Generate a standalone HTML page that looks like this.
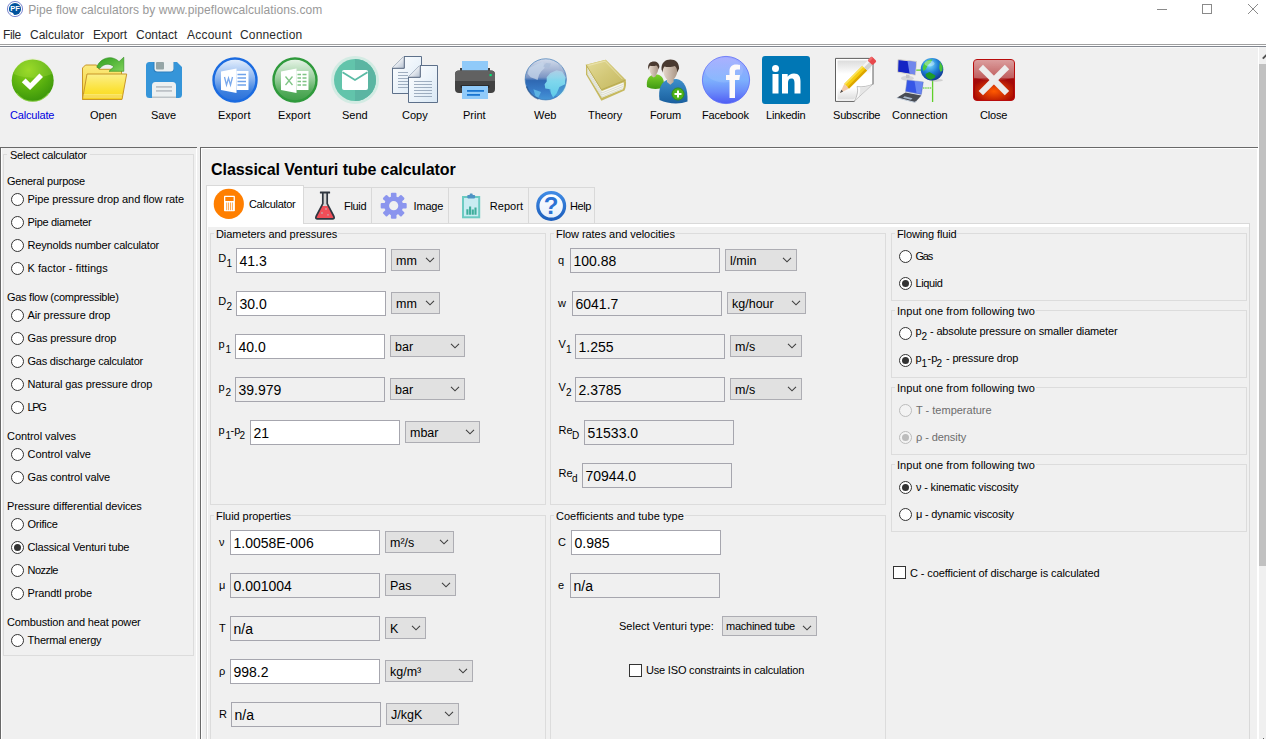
<!DOCTYPE html>
<html><head><meta charset="utf-8"><title>Pipe flow calculators</title>
<style>

html,body{margin:0;padding:0}
body{width:1266px;height:739px;overflow:hidden;position:relative;background:#f0f0f0;font-family:"Liberation Sans",sans-serif;font-size:11px;color:#000}
div,span.t,svg{position:absolute;box-sizing:border-box}
.t{white-space:nowrap;line-height:20px;height:20px}
.inp{background:#fff;border:1px solid #a6a6ae}
.inp.ro{background:#f0f0f0}
.cb{background:#e1e1e1;border:1px solid #adadb3}
.gb{border:1px solid #dcdcdc}
.rd{width:13px;height:13px;border:1px solid #333;border-radius:50%;background:#fff}
.rd.on::after{content:"";position:absolute;left:2px;top:2px;width:7px;height:7px;border-radius:50%;background:#333}
.rd.dis{border-color:#bcbcbc;background:#f3f3f3}
.rd.dis.on::after{background:#bcbcbc}
.ck{width:13px;height:13px;border:1px solid #333;background:#fff}
.lbl{background:#f0f0f0;height:12px}

</style></head>
<body>
<div style="left:0px;top:0px;width:1266px;height:44px;background:#fff"></div>
<svg style="left:6px;top:0px" width="18" height="18" viewBox="0 0 18 18"><circle cx="9" cy="9" r="7.600" fill="#fff" stroke="#7b86cf" stroke-width="1"/><circle cx="9" cy="9" r="6.100" fill="#00529c"/><text x="9" y="11.400" font-size="7.500" font-weight="bold" fill="#fff" text-anchor="middle" font-family="Liberation Sans, sans-serif">PF</text><path d="M3.500 11.500l3.500 1.500 1.500 3-3-1z" fill="#fff"/></svg>
<span id="t1" class="t " style="left:28.2px;top:0px;font-size:12px;color:#999;letter-spacing:0.075px;">Pipe flow calculators by www.pipeflowcalculations.com</span>
<svg style="left:1150px;top:0" width="116" height="20" viewBox="0 0 116 20"><g stroke="#8a8a8a" stroke-width="1" fill="none"><path d="M7 9.5h10"/><rect x="52.5" y="4.5" width="9" height="9"/><path d="M98 4l10 10M108 4l-10 10"/></g></svg>
<span id="t2" class="t " style="left:3.0px;top:25px;font-size:12px;color:#2a2a2a;letter-spacing:-0.4px;">File</span>
<span id="t3" class="t " style="left:30.0px;top:25px;font-size:12px;color:#2a2a2a;">Calculator</span>
<span id="t4" class="t " style="left:93.0px;top:25px;font-size:12px;color:#2a2a2a;letter-spacing:-0.133px;">Export</span>
<span id="t5" class="t " style="left:136.0px;top:25px;font-size:12px;color:#2a2a2a;">Contact</span>
<span id="t6" class="t " style="left:187.0px;top:25px;font-size:12px;color:#2a2a2a;letter-spacing:0.228px;">Account</span>
<span id="t7" class="t " style="left:240.0px;top:25px;font-size:12px;color:#2a2a2a;letter-spacing:0.16px;">Connection</span>
<div style="left:0px;top:44px;width:1266px;height:1px;background:#a0a0a0"></div>
<div style="left:0px;top:45px;width:1266px;height:1px;background:#fff"></div>
<div style="left:0px;top:46px;width:1266px;height:1px;background:#828790"></div>
<div style="left:0px;top:47px;width:1266px;height:1px;background:#fafafa"></div>
<span id="t8" class="t " style="left:10.0px;top:105px;color:#0000e0;letter-spacing:-0.178px;">Calculate</span>
<span id="t9" class="t " style="left:90.0px;top:105px;">Open</span>
<span id="t10" class="t " style="left:151.0px;top:105px;">Save</span>
<span id="t11" class="t " style="left:218.0px;top:105px;letter-spacing:0.133px;">Export</span>
<span id="t12" class="t " style="left:278.0px;top:105px;letter-spacing:0.133px;">Export</span>
<span id="t13" class="t " style="left:342.0px;top:105px;">Send</span>
<span id="t14" class="t " style="left:402.0px;top:105px;">Copy</span>
<span id="t15" class="t " style="left:463.0px;top:105px;">Print</span>
<span id="t16" class="t " style="left:534.0px;top:105px;">Web</span>
<span id="t17" class="t " style="left:588.0px;top:105px;">Theory</span>
<span id="t18" class="t " style="left:650.0px;top:105px;letter-spacing:-0.16px;">Forum</span>
<span id="t19" class="t " style="left:702.0px;top:105px;letter-spacing:-0.2px;">Facebook</span>
<span id="t20" class="t " style="left:766.0px;top:105px;letter-spacing:-0.2px;">Linkedin</span>
<span id="t21" class="t " style="left:833.0px;top:105px;letter-spacing:-0.178px;">Subscribe</span>
<span id="t22" class="t " style="left:892.0px;top:105px;">Connection</span>
<span id="t23" class="t " style="left:980.0px;top:105px;letter-spacing:-0.16px;">Close</span>
<svg style="left:0;top:50px" width="1060" height="60" viewBox="0 50 1060 60">
<defs>
<radialGradient id="gCalc" cx="0.4" cy="0.25" r="0.9"><stop offset="0" stop-color="#8fd41a"/><stop offset="0.55" stop-color="#55ad0e"/><stop offset="1" stop-color="#2f8a0a"/></radialGradient>
<linearGradient id="gFold" x1="0" y1="0" x2="0" y2="1"><stop offset="0" stop-color="#fbef8a"/><stop offset="0.6" stop-color="#fbe23a"/><stop offset="1" stop-color="#f9d71c"/></linearGradient>
<linearGradient id="gFoldB" x1="0" y1="0" x2="0" y2="1"><stop offset="0" stop-color="#fbea80"/><stop offset="1" stop-color="#f5d02a"/></linearGradient>
<linearGradient id="gArr" x1="0" y1="0" x2="1" y2="1"><stop offset="0" stop-color="#2e9e1e"/><stop offset="1" stop-color="#7fd15a"/></linearGradient>
<linearGradient id="gWord" x1="0" y1="0" x2="0" y2="1"><stop offset="0" stop-color="#e8f1fd"/><stop offset="0.45" stop-color="#8db6ef"/><stop offset="0.75" stop-color="#3f82e0"/><stop offset="1" stop-color="#2a6fd8"/></linearGradient>
<linearGradient id="gXls" x1="0" y1="0" x2="0" y2="1"><stop offset="0" stop-color="#eaf5ea"/><stop offset="0.45" stop-color="#9bcf9f"/><stop offset="0.75" stop-color="#57ad5e"/><stop offset="1" stop-color="#3d9c47"/></linearGradient>
<linearGradient id="gPage" x1="0" y1="0" x2="1" y2="1"><stop offset="0" stop-color="#ffffff"/><stop offset="1" stop-color="#d9e8f5"/></linearGradient>
<radialGradient id="gWeb" cx="0.55" cy="0.55" r="0.6"><stop offset="0" stop-color="#5fd0e6"/><stop offset="0.6" stop-color="#3a86c4"/><stop offset="1" stop-color="#2f5f9c"/></radialGradient>
<linearGradient id="gWeb2" x1="0" y1="0" x2="0" y2="1"><stop offset="0" stop-color="#d3dcec"/><stop offset="0.250" stop-color="#a9b9d6"/><stop offset="0.450" stop-color="#7d96c4"/><stop offset="0.530" stop-color="#2f68b2"/><stop offset="0.800" stop-color="#3a7ec9"/><stop offset="1" stop-color="#4596d6"/></linearGradient>
<linearGradient id="gAfr" x1="0" y1="0" x2="0" y2="1"><stop offset="0" stop-color="#b4d4ea" stop-opacity="0.800"/><stop offset="0.400" stop-color="#86e0f2" stop-opacity="0.900"/><stop offset="1" stop-color="#5fcfea" stop-opacity="0.900"/></linearGradient>
<linearGradient id="gFoldC" x1="0.300" y1="0.300" x2="1" y2="1"><stop offset="0" stop-color="#ffffff"/><stop offset="1" stop-color="#b4c0d0"/></linearGradient>
<linearGradient id="gWebHi" x1="0" y1="0" x2="0" y2="1"><stop offset="0" stop-color="#e8eef6" stop-opacity="0.850"/><stop offset="1" stop-color="#ffffff" stop-opacity="0"/></linearGradient>
<linearGradient id="gBook" x1="0" y1="0" x2="1" y2="1"><stop offset="0" stop-color="#e4dc9a"/><stop offset="0.5" stop-color="#d3c878"/><stop offset="1" stop-color="#c4b75e"/></linearGradient>
<linearGradient id="gFb" x1="0" y1="0" x2="0" y2="1"><stop offset="0" stop-color="#a2a8ff"/><stop offset="0.5" stop-color="#7db0fd"/><stop offset="0.75" stop-color="#6b8cfa"/><stop offset="1" stop-color="#4f5cf4"/></linearGradient>
<linearGradient id="gPaper" x1="0" y1="0" x2="0" y2="1"><stop offset="0" stop-color="#dcdcdc"/><stop offset="0.350" stop-color="#ffffff"/><stop offset="0.700" stop-color="#ffffff"/><stop offset="1" stop-color="#dedede"/></linearGradient>
<linearGradient id="gClose" x1="0" y1="0" x2="0" y2="1"><stop offset="0" stop-color="#d89292"/><stop offset="0.45" stop-color="#b84a4a"/><stop offset="0.47" stop-color="#a30a0a"/><stop offset="1" stop-color="#a80800"/></linearGradient>
<radialGradient id="gCloseGlow" cx="0.5" cy="0.6" r="0.6"><stop offset="0" stop-color="#ff5a00"/><stop offset="1" stop-color="#ff5a00" stop-opacity="0"/></radialGradient>
<radialGradient id="gEarth" cx="0.4" cy="0.3" r="0.75"><stop offset="0" stop-color="#7fe0ff"/><stop offset="0.5" stop-color="#1f7fd6"/><stop offset="1" stop-color="#10308c"/></radialGradient>
<linearGradient id="gMon" x1="0" y1="0" x2="1" y2="1"><stop offset="0" stop-color="#1020b0"/><stop offset="0.5" stop-color="#2a4ae8"/><stop offset="1" stop-color="#7fa8ff"/></linearGradient>
<linearGradient id="gBlue" x1="0" y1="0" x2="0" y2="1"><stop offset="0" stop-color="#3d8fcb"/><stop offset="1" stop-color="#1a5f9e"/></linearGradient>
<linearGradient id="gGreen" x1="0" y1="0" x2="0" y2="1"><stop offset="0" stop-color="#7ccf2a"/><stop offset="1" stop-color="#3f9a12"/></linearGradient>
<linearGradient id="gSkin" x1="0" y1="0" x2="1" y2="0"><stop offset="0" stop-color="#e6d8cc"/><stop offset="1" stop-color="#a89484"/></linearGradient>
</defs>
<!-- Calculate -->
<circle cx="32.7" cy="80.5" r="21" fill="url(#gCalc)"/>
<path d="M13.200 73.500a20.200 20.200 0 0 1 39 0c-9 5.500-30 5.500-39 0z" fill="#c8f060" opacity="0.220"/><path d="M16.500 93a20 20 0 0 0 32.400 0" fill="none" stroke="#9ade4a" stroke-width="1.200" opacity="0.700"/><path d="M21.800 82.300l3.800-3.700 4.600 4.300 9.200-9.500 3.600 3.600-12.900 13.100z" fill="#fff"/>
<!-- Open -->
<path d="M82.500 99.500V68l3-3h11l2.500 4.300h22.500v5" fill="url(#gFoldB)" stroke="#c8962a" stroke-width="1"/>
<path d="M82.5 99.5l4.5-25.5h39.7l-4.7 25.5z" fill="url(#gFold)" stroke="#c8962a" stroke-width="1"/>
<path d="M83.500 95h38.600M83.300 97h38.300" stroke="#fdf6b4" stroke-width="0.900"/><path d="M83.400 96h38.400M83.200 98h38.200" stroke="#e8b830" stroke-width="0.500"/>
<path d="M96.800 67.200C99 60.500 106 56.600 112.500 58c2.800.700 5 2 6.500 3.700l4.800-4.500v14.100h-14.800l4.800-4.500c-3.500-3.600-10-3.800-14 1.700z" fill="url(#gArr)" stroke="#2c8c1c" stroke-width="0.600"/>
<!-- Save -->
<path d="M149.5 62h27.5l5 5v27.5a3.5 3.5 0 0 1-3.500 3.500h-29a3.500 3.500 0 0 1-3.500-3.500v-29a3.500 3.500 0 0 1 3.500-3.500z" fill="#3595d9"/>
<path d="M153.500 62h20.500v7a3.500 3.500 0 0 1-3.500 3.500h-13.500a3.500 3.500 0 0 1-3.500-3.500z" fill="#2f80be"/>
<path d="M154.5 62h19v6.500a3 3 0 0 1-3 3h-13a3 3 0 0 1-3-3z" fill="#ecf0f1"/>
<rect x="156" y="62" width="8" height="7.500" rx="1" fill="#95a5a6"/>
<path d="M152 98v-12.500a3.500 3.500 0 0 1 3.500-3.500h17a3.500 3.500 0 0 1 3.500 3.500v12.500z" fill="#ecf0f1"/>
<rect x="152" y="96.500" width="24" height="1.500" fill="#bdc3c7"/>
<rect x="156" y="86" width="16" height="1.800" fill="#bdc3c7"/><rect x="156" y="90" width="16" height="1.800" fill="#bdc3c7"/>
<!-- Word export -->
<circle cx="235" cy="80" r="21.500" fill="url(#gWord)" stroke="#1b6be0" stroke-width="2.400"/>
<path d="M221 71.500l15.500-3v24.500l-15.500-3z" fill="#fff"/><path d="M236.500 71h12v19h-12z" fill="#fff"/>
<path d="M237.500 74.500h8.500M237.500 78h8.500M237.500 81.500h8.500M237.500 85h8.500" stroke="#6fa3ea" stroke-width="1.300"/>
<path d="M224.500 77l2 8 2-7 2 7 2-8" stroke="#7aa9ec" stroke-width="1.300" fill="none"/>
<!-- Excel export -->
<circle cx="295" cy="80" r="21.500" fill="url(#gXls)" stroke="#2f9a3c" stroke-width="2.400"/>
<path d="M281 71.500l15.500-3v24.500l-15.500-3z" fill="#fff"/><path d="M296.500 71h12v19h-12z" fill="#fff"/>
<path d="M297.500 74.500h3.500M302.500 74.500h4M297.500 78h3.500M302.500 78h4M297.500 81.500h3.500M302.500 81.500h4M297.500 85h3.500M302.500 85h4" stroke="#7fc485" stroke-width="1.400"/>
<path d="M285.500 76.500l7 8.500M292.500 76.500l-7 8.500" stroke="#7fc485" stroke-width="1.300" fill="none"/>
<!-- Send -->
<circle cx="355" cy="80" r="24" fill="#d3ebe3"/>
<circle cx="355" cy="80" r="21" fill="#62c4ab"/>
<path d="M355 59a21 21 0 0 1 0 42z" fill="#5bb5a2"/>
<rect x="342" y="70" width="26" height="20" rx="2" fill="#fff"/>
<path d="M342.500 72.300l12.500 7.700 12.500-7.700" fill="none" stroke="#5bbba5" stroke-width="1.900"/>
<!-- Copy -->
<path d="M404 56.500h17.500v37h-29v-25.500z" fill="url(#gPage)" stroke="#5d708a" stroke-width="1" stroke-linejoin="round"/><path d="M393.500 68.500l10.500-11" stroke="#c4ccd8" stroke-width="1.200"/>
<path d="M404 56.500v11.500h-11.500z" fill="url(#gFoldC)"/><path d="M404.300 57v11.300h-11.500" fill="none" stroke="#4f6078" stroke-width="1"/>
<path d="M398 72.500h10M398 75.500h10M398 78.500h10M398 81.500h10M398 84.500h10M398 87.500h10" stroke="#7d8fa6" stroke-width="0.700"/>
<path d="M420 65.500h17.500v37h-29v-25.500z" fill="url(#gPage)" stroke="#5d708a" stroke-width="1" stroke-linejoin="round"/><path d="M409.500 77.500l10.500-11" stroke="#c4ccd8" stroke-width="1.200"/>
<path d="M420 65.500v11.500h-11.500z" fill="url(#gFoldC)"/><path d="M420.300 66v11.300h-11.500" fill="none" stroke="#4f6078" stroke-width="1"/>
<path d="M414 81.500h18M414 84.500h18M414 87.500h18M414 90.500h18M414 93.500h18M414 96.500h18" stroke="#7d8fa6" stroke-width="0.700"/>
<!-- Print -->
<rect x="460" y="68" width="30" height="4" fill="#424242"/>
<rect x="462" y="61" width="26" height="10" fill="#90caf9"/>
<path d="M459 70.500h32a4 4 0 0 1 4 4v14.500a4 4 0 0 1-4 4h-32a4 4 0 0 1-4-4v-14.500a4 4 0 0 1 4-4z" fill="#424242"/>
<path d="M459 70.500h32a4 4 0 0 1 4 4v6.500h-40v-6.500a4 4 0 0 1 4-4z" fill="#616161"/>
<rect x="460.500" y="85" width="29" height="3" rx="1" fill="#2b2b2b"/>
<rect x="462" y="86" width="26" height="13" fill="#90caf9"/>
<rect x="467" y="90" width="17" height="1.800" fill="#1976d2"/><rect x="467" y="94" width="13" height="1.800" fill="#1976d2"/>
<rect x="489.500" y="74" width="2.200" height="2.200" fill="#00e676"/>
<!-- Web -->
<circle cx="545.750" cy="79.350" r="20.600" fill="url(#gWeb2)" stroke="#3d78b4" stroke-width="0.700"/>
<ellipse cx="557" cy="84" rx="9" ry="12" fill="#6fe4f4" opacity="0.250"/>
<path d="M529.100 68.100l7.100-3.500 7-2.900 1.400 6.400-3.500 3.500-2.100 3.500-1.400 4.900-3.500-1.400-3.500-1.400-2.900-3.500z" fill="#c6d6ea" opacity="0.750"/>
<path d="M546.700 77.200l3.600-4.200 6.300-2.800 5.600 1.400 3.500 5.600-.700 7.100-5.600 2.800-2.800 6.300-3.500 4.200-2.100-4.200-.700-4.200-5-.700-.700-4.200 2.100-2.900z" fill="url(#gAfr)"/>
<path d="M533.400 89.200l7.700 2.800-2.800 5.600-2.800-1.400z" fill="#5fb8e4" opacity="0.900"/>
<path d="M543 66.500l3-3.500 5 .500-2 4.500zM558 63l4 3-2 3z" fill="#a8bcd8" opacity="0.700"/>
<path d="M526.500 86.500a20.600 20.600 0 0 0 12 12.500" stroke="#1c4a86" stroke-width="1.500" fill="none" opacity="0.600"/>
<!-- Theory -->
<path d="M586 64.800l19.700-5.100 20 20.300c.800 3.500.300 7.500-1.200 10.500l-23.100 10.300-15.400-26.300z" fill="#c6b95f"/>
<path d="M587.300 67l14.500 24 21.800-8.800c.600 2.300.300 5-.700 7l-21.100 8.600-14.300-23.300z" fill="#f6f6ee"/>
<path d="M587.500 69.500l14.300 23.500 21.600-8.700M587.500 71.800l14.300 23.300 21.300-8.600M587.500 74l14.300 23 20.800-8.400" stroke="#c9ccbc" stroke-width="0.600" fill="none"/>
<path d="M586 64.800l19.700-5.100 20 20.300-24.300 9.700z" fill="url(#gBook)"/>
<path d="M588.500 65.500l16.500-4.300 17.500 18" stroke="#f0ebc0" stroke-width="0.900" fill="none" opacity="0.700"/>
<path d="M586 64.800l15.400 24.900 24.300-9.700" stroke="#b5a74e" stroke-width="0.800" fill="none"/>
<!-- Forum -->
<path d="M647 87c-1-7 1.500-11.500 7-12.500l3.500 0c5 1 7 5.500 6.500 12.500-5 2.500-12 2.500-17 0z" fill="url(#gGreen)"/>
<path d="M649.300 67.500c0-3.500 1.800-5.500 4.500-5.500s4.600 2 4.600 5.500c0 3.500-1.400 6-2.300 7l0 1.500-2.300 1.500-2.300-1.500 0-1.500c-.900-1-2.200-3.500-2.200-7z" fill="url(#gSkin)"/>
<path d="M648.100 67.500c0-4 2.500-6 5.700-6s5.600 2 5.600 5.500l-1.200 2.500c0-2.500-.800-3.700-2-4-1.500.700-4.500.700-6.200.300-.700.800-1.200 2.400-1 4.200z" fill="#4a3a30"/>
<path d="M659.500 100c-1.500-11 1.500-19 9.500-20.500l7.500-.500c8 1.500 11.500 9 11 22.500-8 3-19.500 2.500-28-1.500z" fill="url(#gBlue)"/>
<path d="M663 69c0-5.500 3-8.500 7.300-8.500s7.300 3 7.300 8.500c0 5.500-2.600 9-4 10.500l0 2.500-3.300 2.800-3.300-2.800 0-2.500c-1.400-1.500-4-5-4-10.500z" fill="url(#gSkin)"/>
<path d="M661.500 69.500c-.500-7 4-10.100 9-10.100s8.700 3.200 8.600 9l-1.900 4c0-3.700-.900-5.500-2.700-6.400-2.700 1.300-7.200 1.300-10 .400-1.300 1.400-2 3.700-1.700 6.400z" fill="#4a3a30"/>
<circle cx="678" cy="94" r="6.100" fill="#4fb31a" stroke="#2f8a10" stroke-width="0.800"/>
<path d="M678 90.500v7M674.500 94h7" stroke="#fff" stroke-width="2"/>
<!-- Facebook -->
<circle cx="726" cy="80" r="23.600" fill="url(#gFb)" stroke="#5b6cf8" stroke-width="0.800"/>
<ellipse cx="724" cy="70" rx="19" ry="12.500" fill="#fff" opacity="0.100"/>
<path d="M740 65v4.500h-3c-1.600 0-2 .800-2 2.200v3.300h5l-.700 5h-4.300v18h-5.500v-18h-3.500v-5h3.500v-4c0-4 2.500-6.500 6.500-6.500 1.800 0 3.300.200 4 .500z" fill="#fdfafa"/>
<!-- Linkedin -->
<rect x="762" y="56" width="48" height="48" rx="3" fill="#0077b5"/>
<circle cx="775.500" cy="68.500" r="3.500" fill="#fff"/><rect x="772.500" y="74" width="6" height="19.500" fill="#fff"/>
<path d="M782 74h5.700v2.700c1-1.900 3.200-3.200 6.300-3.200 5 0 6.500 3 6.500 8v12h-6v-10.500c0-2.500-.500-4.400-3.100-4.400s-3.400 1.900-3.400 4.400v10.500h-6z" fill="#fff"/>
<!-- Subscribe -->
<path d="M835.500 58.400h37.500v26l-18.500 17h-19z" fill="#fff"/><path d="M873 84.400v-26h-37.500v43h19" fill="none" stroke="#5e5e5e" stroke-width="1"/>
<path d="M837.500 60.400h33.500v23l-17.500 16h-16z" fill="url(#gPaper)"/>
<path d="M873 84c-4 2.200-11 3.300-16 2.500 1.500 4.500 0 10.500-3 15z" fill="#fafafa" stroke="#9a9a9a" stroke-width="0.600"/>
<path d="M871.500 85.500c-4 1.500-8 2-11.500 1.800 .500 3-.200 6.500-1.500 9.500z" fill="#d8d8d8" opacity="0.600"/>
<g transform="translate(840 92.900) rotate(-45)">
<path d="M0 0l9.500-3.400v6.800z" fill="#f2c9ab"/>
<path d="M0 0l3.200-1.150v2.300z" fill="#4a4a4a"/>
<rect x="9.500" y="-3.400" width="25.500" height="6.800" fill="#f6cc10"/>
<rect x="9.500" y="-3.400" width="25.500" height="1.600" fill="#fbe25a"/>
<rect x="9.500" y="1" width="25.500" height="2.400" fill="#dca600"/>
<rect x="35" y="-3.400" width="7.500" height="6.800" fill="#d2d2d2"/>
<rect x="35" y="-3.400" width="7.500" height="2.400" fill="#f4f4f4"/>
<rect x="42.500" y="-3.500" width="5.800" height="7" rx="1.300" fill="#e8484c"/>
<rect x="42.500" y="-3.500" width="5.800" height="2.200" rx="1" fill="#f06a6c"/>
</g>
<!-- Connection -->
<path d="M916 70.200h6M932.600 80v22" stroke="#5fcf2a" stroke-width="1.300" fill="none"/>
<path d="M923 88h9.600" stroke="#7fd65a" stroke-width="1.300" stroke-dasharray="1.500 0.700" fill="none"/>
<ellipse cx="907.400" cy="78.200" rx="6.400" ry="2.400" fill="#d6d6d8"/>
<path d="M906 74.500l3.500 .600v3h-3.500z" fill="#c4c4c8"/>
<path d="M898 59.600l18.500 1.900-1.100 13.600-17.800-3z" fill="#1424c4" stroke="#dcd8cc" stroke-width="1"/>
<path d="M907.500 60.900l8.600 .900-1 12.800-5.500-.900z" fill="#90a8fa" opacity="0.750"/>
<path d="M905.500 92.500l15.900 3.100-6.400 6.800-18.200-4.600z" fill="#484c54"/>
<path d="M896.800 97.800l18.200 4.600 1.500-1.500" stroke="#c4d0de" stroke-width="1" fill="none"/>
<path d="M903 97.800l8 2 1.500-1.600-8-1.900z" fill="#a8b8cc"/>
<path d="M907 80l16.300 1.900-1.900 12.500-15.900-3z" fill="#3656e6" stroke="#8090c0" stroke-width="0.500"/>
<path d="M914.500 81l8.300 1-1.800 11.800-4.500-.900z" fill="#8aa6fa" opacity="0.600"/>
<ellipse cx="936" cy="80.300" rx="7" ry="1.500" fill="#b0b0b0" opacity="0.500"/>
<circle cx="932" cy="69.200" r="11.300" fill="url(#gEarth)"/>
<path d="M922.600 67.900l1.500-4.500 3.800-3.100 4.500-1.100-1.500 3.400-3 2.300-2.300 4.500-2.300 1.500z" fill="#4ccc3c"/>
<path d="M940 61.800l2.700 4.600-.400 4.500-1.900.800-1.200-3.800.400-3.800z" fill="#48c438"/>
<path d="M925.600 74l3.800-1.900 6.100 3.400-.800 2.300-3.800 1.900-3-1.200-1.900-2.300z" fill="#1f9c28"/>
<ellipse cx="929.500" cy="63.500" rx="5" ry="3" fill="#fff" opacity="0.350"/>
<!-- Close -->
<rect x="973.500" y="59.500" width="41" height="41" rx="3.500" fill="url(#gClose)" stroke="#b80d0d" stroke-width="1"/>
<rect x="975" y="78" width="38" height="22" rx="3" fill="url(#gCloseGlow)"/>
<g transform="translate(993.900 80.100) rotate(45)" fill="#ebebeb"><rect x="-18.500" y="-3.100" width="37" height="6.200"/><rect x="-3.100" y="-18.500" width="6.200" height="37"/></g><path d="M974 60h40v17.500c-12 4-28 4-40 0z" fill="#fff" opacity="0.120"/>
</svg>
<div style="left:0px;top:147px;width:197px;height:1px;background:#696969"></div>
<div style="left:0px;top:147px;width:1px;height:592px;background:#696969"></div>
<div style="left:196px;top:148px;width:1px;height:591px;background:#fff"></div>
<div style="left:1px;top:148px;width:1px;height:591px;background:#fff"></div>
<div style="left:200px;top:147px;width:1058px;height:1px;background:#696969"></div>
<div style="left:200px;top:147px;width:1px;height:592px;background:#696969"></div>
<div style="left:201px;top:148px;width:1056px;height:1px;background:#fff"></div>
<div style="left:201px;top:148px;width:1px;height:591px;background:#fff"></div>
<div style="left:1258px;top:47px;width:8px;height:692px;background:#f0f0f0"></div>
<div style="left:1257px;top:148px;width:1px;height:591px;background:#fff"></div>
<div style="left:1258px;top:47px;width:1px;height:692px;background:#fff"></div>
<div style="left:1259px;top:64px;width:7px;height:502px;background:#c1c1c1"></div>
<svg style="left:1258px;top:50px" width="8" height="12" viewBox="0 0 8 12"><path d="M4.800 8.700L8.500 4.800" fill="none" stroke="#505050" stroke-width="1.800"/></svg>
<div style="left:1263px;top:738px;width:1px;height:1px;background:#606060"></div>
<div class="gb" style="left:3px;top:154px;width:191px;height:502px;"></div>
<div class="lbl" style="left:7px;top:148px;width:83px;height:12px;"></div>
<span id="t24" class="t " style="left:10.0px;top:145px;letter-spacing:-0.235px;">Select calculator</span>
<span id="t25" class="t " style="left:7.0px;top:171px;letter-spacing:-0.266px;">General purpose</span>
<div class="rd" style="left:11px;top:193px;width:13px;height:13px;"></div>
<span id="t26" class="t " style="left:27.5px;top:189px;letter-spacing:-0.076px;">Pipe pressure drop and flow rate</span>
<div class="rd" style="left:11px;top:216px;width:13px;height:13px;"></div>
<span id="t27" class="t " style="left:27.5px;top:212px;letter-spacing:-0.307px;">Pipe diameter</span>
<div class="rd" style="left:11px;top:239px;width:13px;height:13px;"></div>
<span id="t28" class="t " style="left:27.5px;top:235px;letter-spacing:-0.184px;">Reynolds number calculator</span>
<div class="rd" style="left:11px;top:262px;width:13px;height:13px;"></div>
<span id="t29" class="t " style="left:27.5px;top:258px;letter-spacing:0.042px;">K factor - fittings</span>
<span id="t30" class="t " style="left:7.0px;top:287px;letter-spacing:-0.279px;">Gas flow (compressible)</span>
<div class="rd" style="left:11px;top:309px;width:13px;height:13px;"></div>
<span id="t31" class="t " style="left:27.5px;top:305px;letter-spacing:-0.094px;">Air pressure drop</span>
<div class="rd" style="left:11px;top:332px;width:13px;height:13px;"></div>
<span id="t32" class="t " style="left:27.5px;top:328px;letter-spacing:-0.141px;">Gas pressure drop</span>
<div class="rd" style="left:11px;top:355px;width:13px;height:13px;"></div>
<span id="t33" class="t " style="left:27.5px;top:351px;letter-spacing:-0.234px;">Gas discharge calculator</span>
<div class="rd" style="left:11px;top:378px;width:13px;height:13px;"></div>
<span id="t34" class="t " style="left:27.5px;top:374px;letter-spacing:-0.096px;">Natural gas pressure drop</span>
<div class="rd" style="left:11px;top:401px;width:13px;height:13px;"></div>
<span id="t35" class="t " style="left:27.5px;top:397px;letter-spacing:-1.4px;">LPG</span>
<span id="t36" class="t " style="left:7.0px;top:426px;letter-spacing:-0.057px;">Control valves</span>
<div class="rd" style="left:11px;top:448px;width:13px;height:13px;"></div>
<span id="t37" class="t " style="left:27.5px;top:444px;letter-spacing:-0.062px;">Control valve</span>
<div class="rd" style="left:11px;top:471px;width:13px;height:13px;"></div>
<span id="t38" class="t " style="left:27.5px;top:467px;letter-spacing:-0.142px;">Gas control valve</span>
<span id="t39" class="t " style="left:7.0px;top:496px;letter-spacing:-0.111px;">Pressure differential devices</span>
<div class="rd" style="left:11px;top:518px;width:13px;height:13px;"></div>
<span id="t40" class="t " style="left:27.5px;top:514px;letter-spacing:-0.228px;">Orifice</span>
<div class="rd on" style="left:11px;top:541px;width:13px;height:13px;"></div>
<span id="t41" class="t " style="left:27.5px;top:537px;letter-spacing:-0.182px;">Classical Venturi tube</span>
<div class="rd" style="left:11px;top:564px;width:13px;height:13px;"></div>
<span id="t42" class="t " style="left:27.5px;top:560px;letter-spacing:-0.533px;">Nozzle</span>
<div class="rd" style="left:11px;top:587px;width:13px;height:13px;"></div>
<span id="t43" class="t " style="left:27.5px;top:583px;letter-spacing:-0.123px;">Prandtl probe</span>
<span id="t44" class="t " style="left:7.0px;top:612px;letter-spacing:-0.16px;">Combustion and heat power</span>
<div class="rd" style="left:11px;top:634px;width:13px;height:13px;"></div>
<span id="t45" class="t " style="left:27.5px;top:630px;letter-spacing:-0.229px;">Thermal energy</span>
<span id="t46" class="t " style="left:211.0px;top:160px;font-size:16px;font-weight:bold;letter-spacing:-0.048px;">Classical Venturi tube calculator</span>
<div style="left:303px;top:187px;width:292px;height:37px;background:#f0f0f0;border:1px solid #d9d9d9"></div>
<div style="left:371px;top:188px;width:1px;height:35px;background:#d9d9d9"></div>
<div style="left:448px;top:188px;width:1px;height:35px;background:#d9d9d9"></div>
<div style="left:528px;top:188px;width:1px;height:35px;background:#d9d9d9"></div>
<div style="left:206px;top:223px;width:1044px;height:520px;background:#fff;border:1px solid #d9d9d9"></div>
<div style="left:206px;top:185px;width:98px;height:39px;background:#fff;border:1px solid #d9d9d9;border-bottom:none"></div>
<div style="left:208px;top:227px;width:1041px;height:512px;background:#f0f0f0"></div>
<svg style="left:207px;top:186px" width="390" height="37" viewBox="207 186 390 37">
<defs><linearGradient id="gHelp" x1="0" y1="0" x2="0" y2="1"><stop offset="0" stop-color="#3f8ae4"/><stop offset="1" stop-color="#1d5fbd"/></linearGradient>
<linearGradient id="gHelpIn" x1="0" y1="0" x2="0" y2="1"><stop offset="0" stop-color="#ffffff"/><stop offset="1" stop-color="#e4eefb"/></linearGradient></defs>
<circle cx="228.800" cy="203.900" r="15.100" fill="#ff7f00"/>
<rect x="224" y="195.700" width="10.900" height="15.500" rx="0.800" fill="#fff"/>
<rect x="225.300" y="197" width="8.300" height="4" fill="#ff7f00"/>
<path d="M226.700 202.500v7.700M228.600 202.500v7.700M230.500 202.500v7.700M232.400 202.500v7.700" stroke="#ff8f20" stroke-width="0.800"/>
<path d="M322.800 193v10.700l-6.700 12.800q-.900 2.300 1.300 2.300h15.200q2.200 0 1.300-2.300l-6.700-12.800v-10.700z" fill="#d4d4d4"/>
<path d="M321.700 206h6.600l5.600 10.600q.700 2-1.200 2h-15.400q-1.900 0-1.200-2z" fill="#f04e58"/>
<path d="M322.800 193v10.700l-6.700 12.800q-.900 2.300 1.300 2.300h15.200q2.200 0 1.300-2.300l-6.700-12.800v-10.700" fill="none" stroke="#2f3640" stroke-width="1.700" stroke-linejoin="round"/>
<rect x="319.900" y="191.600" width="10.200" height="1.900" rx="0.500" fill="#2f3640"/>
<circle cx="326" cy="209" r="0.900" fill="#c8a0a4"/><circle cx="328" cy="214.800" r="0.900" fill="#c8a0a4"/><circle cx="322" cy="213" r="0.900" fill="#c8a0a4"/>
<g transform="translate(393.700 205.700)" fill="#8b95ee"><circle r="9.500"/>
<rect x="-2.800" y="-13" width="5.600" height="26" rx="1"/><rect x="-2.800" y="-13" width="5.600" height="26" rx="1" transform="rotate(45)"/><rect x="-2.800" y="-13" width="5.600" height="26" rx="1" transform="rotate(90)"/><rect x="-2.800" y="-13" width="5.600" height="26" rx="1" transform="rotate(135)"/>
<circle r="4.600" fill="#f0f0f0"/></g>
<rect x="463" y="197" width="16.200" height="20.300" fill="#c9ecf2" stroke="#6ccbc2" stroke-width="2"/>
<rect x="469.700" y="193.600" width="3" height="2.500" rx="0.800" fill="#4f93c4"/>
<rect x="467.300" y="195" width="7.800" height="3.400" rx="0.800" fill="#4f93c4"/>
<path d="M467.400 214.800v-5.600M470.100 214.800v-8.200M472.800 214.800v-5.200M475.500 214.800v-7.200" stroke="#3fae9c" stroke-width="2.100"/>
<circle cx="551.200" cy="205.900" r="13.350" fill="url(#gHelpIn)" stroke="url(#gHelp)" stroke-width="3.300"/>
<text x="551" y="214.200" font-size="24" font-weight="bold" fill="#2b72d4" text-anchor="middle" font-family="Liberation Sans, sans-serif">?</text>
</svg>
<span id="t47" class="t " style="left:249.0px;top:194px;letter-spacing:-0.32px;">Calculator</span>
<span id="t48" class="t " style="left:344.0px;top:196px;letter-spacing:-0.32px;">Fluid</span>
<span id="t49" class="t " style="left:413.5px;top:196px;letter-spacing:-0.16px;">Image</span>
<span id="t50" class="t " style="left:489.66px;top:196px;letter-spacing:0.079px;">Report</span>
<span id="t51" class="t " style="left:570.0px;top:196px;letter-spacing:-0.4px;">Help</span>
<div class="gb" style="left:210px;top:233px;width:336px;height:272px;"></div>
<div class="lbl" style="left:214px;top:227px;width:124px;height:12px;"></div>
<span id="t52" class="t " style="left:216.0px;top:224px;letter-spacing:-0.07px;">Diameters and pressures</span>
<span id="t53" class="t " style="left:218.2px;top:248px;">D</span>
<span id="t54" class="t " style="left:226.5px;top:254px;font-size:10px;">1</span>
<div class="inp" style="left:236px;top:248px;width:150px;height:25px;"></div>
<span id="t55" class="t " style="left:239.5px;top:251px;font-size:14px;">41.3</span>
<div class="cb" style="left:391px;top:249px;width:49px;height:22px;"></div>
<span id="t56" class="t " style="left:396.0px;top:251px;font-size:12.5px;">mm</span>
<svg style="left:425px;top:257px" width="10" height="6" viewBox="0 0 10 6"><path d="M1 0.800l4 4 4-4" fill="none" stroke="#404040" stroke-width="1.100"/></svg>
<span id="t57" class="t " style="left:218.2px;top:291px;">D</span>
<span id="t58" class="t " style="left:226.5px;top:297px;font-size:10px;">2</span>
<div class="inp" style="left:236px;top:291px;width:150px;height:25px;"></div>
<span id="t59" class="t " style="left:239.5px;top:294px;font-size:14px;">30.0</span>
<div class="cb" style="left:391px;top:292px;width:49px;height:22px;"></div>
<span id="t60" class="t " style="left:396.0px;top:294px;font-size:12.5px;">mm</span>
<svg style="left:425px;top:300px" width="10" height="6" viewBox="0 0 10 6"><path d="M1 0.800l4 4 4-4" fill="none" stroke="#404040" stroke-width="1.100"/></svg>
<span id="t61" class="t " style="left:218.5px;top:334px;">p</span>
<span id="t62" class="t " style="left:225.5px;top:340px;font-size:10px;">1</span>
<div class="inp" style="left:235px;top:334px;width:150px;height:25px;"></div>
<span id="t63" class="t " style="left:238.5px;top:337px;font-size:14px;">40.0</span>
<div class="cb" style="left:390px;top:335px;width:75px;height:22px;"></div>
<span id="t64" class="t " style="left:395.0px;top:337px;font-size:12.5px;">bar</span>
<svg style="left:450px;top:343px" width="10" height="6" viewBox="0 0 10 6"><path d="M1 0.800l4 4 4-4" fill="none" stroke="#404040" stroke-width="1.100"/></svg>
<span id="t65" class="t " style="left:218.5px;top:377px;">p</span>
<span id="t66" class="t " style="left:225.5px;top:383px;font-size:10px;">2</span>
<div class="inp ro" style="left:235px;top:377px;width:150px;height:25px;"></div>
<span id="t67" class="t " style="left:238.5px;top:380px;font-size:14px;">39.979</span>
<div class="cb" style="left:390px;top:378px;width:75px;height:22px;"></div>
<span id="t68" class="t " style="left:395.0px;top:380px;font-size:12.5px;">bar</span>
<svg style="left:450px;top:386px" width="10" height="6" viewBox="0 0 10 6"><path d="M1 0.800l4 4 4-4" fill="none" stroke="#404040" stroke-width="1.100"/></svg>
<span id="t69" class="t " style="left:218.5px;top:420px;">p</span>
<span id="t70" class="t " style="left:225.5px;top:426px;font-size:10px;">1</span>
<span id="t71" class="t " style="left:230.5px;top:420px;">-p</span>
<span id="t72" class="t " style="left:239.5px;top:426px;font-size:10px;">2</span>
<div class="inp" style="left:250px;top:420px;width:150px;height:25px;"></div>
<span id="t73" class="t " style="left:253.5px;top:423px;font-size:14px;">21</span>
<div class="cb" style="left:405px;top:421px;width:75px;height:22px;"></div>
<span id="t74" class="t " style="left:410.0px;top:423px;font-size:12.5px;">mbar</span>
<svg style="left:465px;top:429px" width="10" height="6" viewBox="0 0 10 6"><path d="M1 0.800l4 4 4-4" fill="none" stroke="#404040" stroke-width="1.100"/></svg>
<div class="gb" style="left:550px;top:233px;width:336px;height:272px;"></div>
<div class="lbl" style="left:554px;top:227px;width:122px;height:12px;"></div>
<span id="t75" class="t " style="left:556.0px;top:224px;letter-spacing:-0.064px;">Flow rates and velocities</span>
<span id="t76" class="t " style="left:558.0px;top:250px;">q</span>
<div class="inp ro" style="left:570px;top:248px;width:150px;height:25px;"></div>
<span id="t77" class="t " style="left:573.5px;top:251px;font-size:14px;">100.88</span>
<div class="cb" style="left:725px;top:249px;width:72px;height:22px;"></div>
<span id="t78" class="t " style="left:730.0px;top:251px;font-size:12.5px;">l/min</span>
<svg style="left:782px;top:257px" width="10" height="6" viewBox="0 0 10 6"><path d="M1 0.800l4 4 4-4" fill="none" stroke="#404040" stroke-width="1.100"/></svg>
<span id="t79" class="t " style="left:558.0px;top:293px;">w</span>
<div class="inp ro" style="left:572px;top:291px;width:150px;height:25px;"></div>
<span id="t80" class="t " style="left:575.5px;top:294px;font-size:14px;">6041.7</span>
<div class="cb" style="left:727px;top:292px;width:79px;height:22px;"></div>
<span id="t81" class="t " style="left:732.0px;top:294px;font-size:12.5px;">kg/hour</span>
<svg style="left:791px;top:300px" width="10" height="6" viewBox="0 0 10 6"><path d="M1 0.800l4 4 4-4" fill="none" stroke="#404040" stroke-width="1.100"/></svg>
<span id="t82" class="t " style="left:558.6px;top:334px;">V</span>
<span id="t83" class="t " style="left:566.0px;top:340px;font-size:10px;">1</span>
<div class="inp ro" style="left:575px;top:334px;width:150px;height:25px;"></div>
<span id="t84" class="t " style="left:578.5px;top:337px;font-size:14px;">1.255</span>
<div class="cb" style="left:730px;top:335px;width:72px;height:22px;"></div>
<span id="t85" class="t " style="left:735.0px;top:337px;font-size:12.5px;">m/s</span>
<svg style="left:787px;top:343px" width="10" height="6" viewBox="0 0 10 6"><path d="M1 0.800l4 4 4-4" fill="none" stroke="#404040" stroke-width="1.100"/></svg>
<span id="t86" class="t " style="left:558.6px;top:377px;">V</span>
<span id="t87" class="t " style="left:566.0px;top:383px;font-size:10px;">2</span>
<div class="inp ro" style="left:575px;top:377px;width:150px;height:25px;"></div>
<span id="t88" class="t " style="left:578.5px;top:380px;font-size:14px;">2.3785</span>
<div class="cb" style="left:730px;top:378px;width:72px;height:22px;"></div>
<span id="t89" class="t " style="left:735.0px;top:380px;font-size:12.5px;">m/s</span>
<svg style="left:787px;top:386px" width="10" height="6" viewBox="0 0 10 6"><path d="M1 0.800l4 4 4-4" fill="none" stroke="#404040" stroke-width="1.100"/></svg>
<span id="t90" class="t " style="left:558.5px;top:420px;">Re</span>
<span id="t91" class="t " style="left:572.0px;top:426px;font-size:10px;">D</span>
<div class="inp ro" style="left:584px;top:420px;width:150px;height:25px;"></div>
<span id="t92" class="t " style="left:587.5px;top:423px;font-size:14px;">51533.0</span>
<span id="t93" class="t " style="left:558.5px;top:463px;">Re</span>
<span id="t94" class="t " style="left:572.0px;top:469px;font-size:10px;">d</span>
<div class="inp ro" style="left:582px;top:463px;width:150px;height:25px;"></div>
<span id="t95" class="t " style="left:585.5px;top:466px;font-size:14px;">70944.0</span>
<div class="gb" style="left:210px;top:515px;width:336px;height:246px;"></div>
<div class="lbl" style="left:214px;top:509px;width:78px;height:12px;"></div>
<span id="t96" class="t " style="left:216.0px;top:506px;letter-spacing:-0.05px;">Fluid properties</span>
<span id="t97" class="t " style="left:219.0px;top:532px;">ν</span>
<div class="inp" style="left:230px;top:530px;width:150px;height:25px;"></div>
<span id="t98" class="t " style="left:233.5px;top:533px;font-size:14px;">1.0058E-006</span>
<div class="cb" style="left:385px;top:531px;width:69px;height:22px;"></div>
<span id="t99" class="t " style="left:390.0px;top:533px;font-size:12.5px;">m²/s</span>
<svg style="left:439px;top:539px" width="10" height="6" viewBox="0 0 10 6"><path d="M1 0.800l4 4 4-4" fill="none" stroke="#404040" stroke-width="1.100"/></svg>
<span id="t100" class="t " style="left:219.0px;top:575px;">μ</span>
<div class="inp ro" style="left:230px;top:573px;width:150px;height:25px;"></div>
<span id="t101" class="t " style="left:233.5px;top:576px;font-size:14px;">0.001004</span>
<div class="cb" style="left:385px;top:574px;width:71px;height:22px;"></div>
<span id="t102" class="t " style="left:390.0px;top:576px;font-size:12.5px;">Pas</span>
<svg style="left:441px;top:582px" width="10" height="6" viewBox="0 0 10 6"><path d="M1 0.800l4 4 4-4" fill="none" stroke="#404040" stroke-width="1.100"/></svg>
<span id="t103" class="t " style="left:219.0px;top:618px;">T</span>
<div class="inp ro" style="left:230px;top:616px;width:150px;height:25px;"></div>
<span id="t104" class="t " style="left:233.5px;top:619px;font-size:14px;">n/a</span>
<div class="cb" style="left:385px;top:617px;width:41px;height:22px;"></div>
<span id="t105" class="t " style="left:390.0px;top:619px;font-size:12.5px;">K</span>
<svg style="left:411px;top:625px" width="10" height="6" viewBox="0 0 10 6"><path d="M1 0.800l4 4 4-4" fill="none" stroke="#404040" stroke-width="1.100"/></svg>
<span id="t106" class="t " style="left:219.0px;top:661px;">ρ</span>
<div class="inp" style="left:230px;top:659px;width:150px;height:25px;"></div>
<span id="t107" class="t " style="left:233.5px;top:662px;font-size:14px;">998.2</span>
<div class="cb" style="left:385px;top:660px;width:88px;height:22px;"></div>
<span id="t108" class="t " style="left:390.0px;top:662px;font-size:12.5px;">kg/m³</span>
<svg style="left:458px;top:668px" width="10" height="6" viewBox="0 0 10 6"><path d="M1 0.800l4 4 4-4" fill="none" stroke="#404040" stroke-width="1.100"/></svg>
<span id="t109" class="t " style="left:219.0px;top:704px;">R</span>
<div class="inp ro" style="left:231px;top:702px;width:150px;height:25px;"></div>
<span id="t110" class="t " style="left:234.5px;top:705px;font-size:14px;">n/a</span>
<div class="cb" style="left:386px;top:703px;width:73px;height:22px;"></div>
<span id="t111" class="t " style="left:391.0px;top:705px;font-size:12.5px;">J/kgK</span>
<svg style="left:444px;top:711px" width="10" height="6" viewBox="0 0 10 6"><path d="M1 0.800l4 4 4-4" fill="none" stroke="#404040" stroke-width="1.100"/></svg>
<div class="gb" style="left:550px;top:515px;width:336px;height:246px;"></div>
<div class="lbl" style="left:554px;top:509px;width:131px;height:12px;"></div>
<span id="t112" class="t " style="left:556.0px;top:506px;letter-spacing:0.031px;">Coefficients and tube type</span>
<span id="t113" class="t " style="left:558.0px;top:532px;">C</span>
<div class="inp" style="left:571px;top:530px;width:150px;height:25px;"></div>
<span id="t114" class="t " style="left:574.5px;top:533px;font-size:14px;">0.985</span>
<span id="t115" class="t " style="left:558.0px;top:575px;">e</span>
<div class="inp ro" style="left:570px;top:573px;width:150px;height:25px;"></div>
<span id="t116" class="t " style="left:573.5px;top:576px;font-size:14px;">n/a</span>
<span id="t117" class="t " style="left:619.0px;top:616px;">Select Venturi type:</span>
<div class="cb" style="left:722px;top:616px;width:95px;height:20px;"></div>
<span id="t118" class="t " style="left:726.0px;top:616px;letter-spacing:-0.247px;">machined tube</span>
<svg style="left:802px;top:625px" width="10" height="6" viewBox="0 0 10 6"><path d="M1 0.800l4 4 4-4" fill="none" stroke="#404040" stroke-width="1.100"/></svg>
<div class="ck" style="left:629px;top:664px;width:13px;height:13px;"></div>
<span id="t119" class="t " style="left:646.0px;top:660px;letter-spacing:-0.188px;">Use ISO constraints in calculation</span>
<div class="gb" style="left:891px;top:233px;width:356px;height:68px;"></div>
<div class="lbl" style="left:895px;top:227px;width:62px;height:12px;"></div>
<span id="t120" class="t " style="left:897.0px;top:224px;letter-spacing:-0.123px;">Flowing fluid</span>
<div class="rd" style="left:899px;top:250px;width:13px;height:13px;"></div>
<span id="t121" class="t " style="left:915.5px;top:246px;letter-spacing:-1.267px;">Gas</span>
<div class="rd on" style="left:899px;top:277px;width:13px;height:13px;"></div>
<span id="t122" class="t " style="left:915.5px;top:273px;letter-spacing:-0.4px;">Liquid</span>
<div class="gb" style="left:891px;top:310px;width:356px;height:68px;"></div>
<div class="lbl" style="left:895px;top:304px;width:141px;height:12px;"></div>
<span id="t123" class="t " style="left:897.0px;top:301px;letter-spacing:0.029px;">Input one from following two</span>
<div class="rd" style="left:899px;top:327px;width:13px;height:13px;"></div>
<span id="t124" class="t " style="left:915.5px;top:321px;">p</span>
<span id="t125" class="t " style="left:921.5px;top:327px;font-size:10px;">2</span>
<span id="t126" class="t " style="left:930.0px;top:321px;letter-spacing:-0.165px;">- absolute pressure on smaller diameter</span>
<div class="rd on" style="left:899px;top:354px;width:13px;height:13px;"></div>
<span id="t127" class="t " style="left:915.5px;top:348px;">p</span>
<span id="t128" class="t " style="left:921.5px;top:354px;font-size:10px;">1</span>
<span id="t129" class="t " style="left:927.5px;top:348px;">-p</span>
<span id="t130" class="t " style="left:936.5px;top:354px;font-size:10px;">2</span>
<span id="t131" class="t " style="left:946.0px;top:348px;letter-spacing:-0.16px;">- pressure drop</span>
<div class="gb" style="left:891px;top:387px;width:356px;height:68px;"></div>
<div class="lbl" style="left:895px;top:381px;width:141px;height:12px;"></div>
<span id="t132" class="t " style="left:897.0px;top:378px;letter-spacing:0.029px;">Input one from following two</span>
<div class="rd dis" style="left:899px;top:404px;width:13px;height:13px;"></div>
<span id="t133" class="t " style="left:916.0px;top:400px;color:#6d6d6d;">T - temperature</span>
<div class="rd on dis" style="left:899px;top:431px;width:13px;height:13px;"></div>
<span id="t134" class="t " style="left:916.0px;top:427px;color:#6d6d6d;letter-spacing:-0.073px;">ρ - density</span>
<div class="gb" style="left:891px;top:464px;width:356px;height:68px;"></div>
<div class="lbl" style="left:895px;top:458px;width:141px;height:12px;"></div>
<span id="t135" class="t " style="left:897.0px;top:455px;letter-spacing:0.029px;">Input one from following two</span>
<div class="rd on" style="left:899px;top:481px;width:13px;height:13px;"></div>
<span id="t136" class="t " style="left:916.0px;top:477px;letter-spacing:-0.174px;">ν - kinematic viscosity</span>
<div class="rd" style="left:899px;top:508px;width:13px;height:13px;"></div>
<span id="t137" class="t " style="left:916.0px;top:504px;letter-spacing:-0.19px;">μ - dynamic viscosity</span>
<div class="ck" style="left:893px;top:566px;width:13px;height:13px;"></div>
<span id="t138" class="t " style="left:910.0px;top:563px;letter-spacing:-0.095px;">C - coefficient of discharge is calculated</span>
</body></html>
